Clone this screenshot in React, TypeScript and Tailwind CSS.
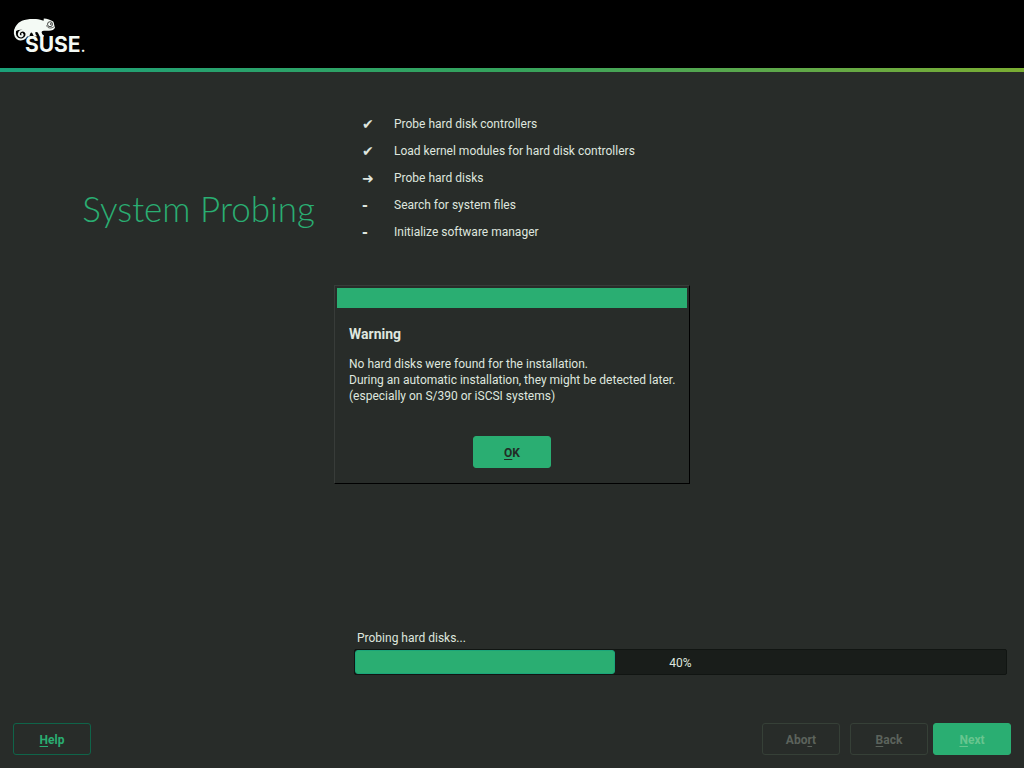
import React from "react";

type StepState = "done" | "current" | "pending";

const steps: { label: string; state: StepState }[] = [
  { label: "Probe hard disk controllers", state: "done" },
  { label: "Load kernel modules for hard disk controllers", state: "done" },
  { label: "Probe hard disks", state: "current" },
  { label: "Search for system files", state: "pending" },
  { label: "Initialize software manager", state: "pending" },
];

const marks: Record<StepState, string> = {
  done: "✔",
  current: "➜",
  pending: "-",
};

const progress = 40;

function SuseLogo() {
  return (
    <svg width="80" height="44" viewBox="0 0 80 44" role="img" aria-label="SUSE logo">
      {/* chameleon body, legs and head */}
      <path
        fill="#f4faf5"
        d="M1 17C1 11.5 4 7 9 4.7C13 3 18 2.7 23 3C26 3.2 28.6 3.9 30.6 4.8L30.8 2.6C34 2.9 38 4 40.2 5.6C41.2 7 41 9.4 42 11.6C41.2 13.8 38.8 14.7 36 14.8L31 14.7C28.8 14.8 28.2 15.8 29 17.6C29.3 18.6 29.8 19 30.9 19.3V20.4H26.8C25.8 19 25.4 16.6 24 15.9L22.2 16.2C22.4 18 22.8 19 23.6 19.6V20.4H21C20 19 19.8 17 18.6 16.4C17.4 16.6 16.8 18 16.4 20.4H13.6C14.4 16.6 12 14 8.6 13.8C4.6 13.6 2 15 1 17Z"
      />
      {/* curled tail */}
      <path
        fill="none"
        stroke="#f4faf5"
        strokeWidth="2"
        strokeLinecap="round"
        d="M3 12.5C1.2 15.5 1.4 20.2 4.4 22.4C7.8 24.6 12.6 23 13.4 19.4C14.2 16 11 13.8 8.4 14.8C5.4 15.8 5 19.4 7.4 20.3C9.2 20.8 10.4 19 9.2 17.9"
      />
      {/* eye and mouth */}
      <circle cx="37" cy="8.2" r="2.5" fill="none" stroke="#000" strokeWidth=".7" />
      <circle cx="37.8" cy="8" r=".8" fill="#000" />
      <path d="M33.5 9.4C34.5 12.4 38.5 13 41.4 10.4" fill="none" stroke="#000" strokeWidth=".6" />
      <text x="12" y="36" fontFamily="Inter, sans-serif" fontSize="21" fontWeight="700" fill="#f4faf5">
        SUSE
        <tspan fontSize="14">.</tspan>
      </text>
    </svg>
  );
}

function Key({ children }: { children: string }) {
  return <span className="underline decoration-1 underline-offset-2 [text-decoration-skip-ink:none]">{children}</span>;
}

const buttonBase = "h-8 w-[78px] rounded-[3px] border pt-0.5 text-xs font-bold leading-4";

export default function App() {
  return (
    <div className="flex min-h-screen flex-col bg-[#282c29] font-['Roboto',sans-serif] text-xs leading-4 text-[#dfe6df]">
      <header className="bg-black">
        <div className="flex h-[68px] items-center px-[13px] pt-2">
          <SuseLogo />
        </div>
        <div className="h-1 bg-linear-to-r from-[#1ba179] via-[#35a35c] to-[#7aad32]" />
      </header>

      <main className="flex flex-1 flex-col">
        <section className="grid grid-cols-[355px_1fr] items-start pt-11">
          <h1 className="pt-[72px] pr-10 text-right font-['Lato',sans-serif] text-[35px] font-light leading-10 whitespace-nowrap text-[#2aae72]">
            System Probing
          </h1>
          <ul className="flex flex-col gap-[11px] pl-[7px]">
            {steps.map((step) => (
              <li key={step.label} className="flex h-4 items-center">
                <span className="w-8 font-['DejaVu_Sans',sans-serif] text-sm font-bold">{marks[step.state]}</span>
                <span>{step.label}</span>
              </li>
            ))}
          </ul>
        </section>

        <section className="mt-auto pr-[17px] pb-12 pl-[354px]">
          <p id="progress-label" className="mb-[3px] pl-[3px]">
            Probing hard disks...
          </p>
          <div
            role="progressbar"
            aria-labelledby="progress-label"
            aria-valuenow={progress}
            aria-valuemin={0}
            aria-valuemax={100}
            className="grid h-[26px] items-center rounded-[2px] border border-[#111512] bg-[#191d1a]"
          >
            <div
              className="col-start-1 row-start-1 h-6 rounded-[3px] border border-[#1ba57a] bg-[#2aae72]"
              style={{ width: `${progress}%` }}
            />
            <span className="col-start-1 row-start-1 pt-0.5 text-center">{progress}%</span>
          </div>
        </section>
      </main>

      <footer className="flex px-[13px] pb-[13px]">
        <button type="button" className={`${buttonBase} border-[#0f6449] text-[#2aae72]`}>
          <Key>H</Key>elp
        </button>
        <div className="ml-auto flex">
          <button type="button" disabled className={`${buttonBase} mr-2.5 border-[#364037] text-[#5c635c]`}>
            Abo<Key>r</Key>t
          </button>
          <button type="button" disabled className={`${buttonBase} mr-[5px] border-[#364037] text-[#5c635c]`}>
            <Key>B</Key>ack
          </button>
          <button type="button" disabled className={`${buttonBase} border-[#2aae72] bg-[#2aae72] text-[#68c58f]`}>
            <Key>N</Key>ext
          </button>
        </div>
      </footer>

      <div className="fixed inset-0 flex items-center justify-center">
        <div
          role="alertdialog"
          aria-labelledby="warning-title"
          aria-describedby="warning-text"
          className="w-[356px] border border-t-[#383c39] border-r-black border-b-black border-l-[#383c39] bg-[#282c29] p-0.5"
        >
          <div className="h-5 bg-[#2aae72]" />
          <div className="px-3 pt-4 pb-[13px]">
            <h2 id="warning-title" className="text-sm font-bold leading-5">
              Warning
            </h2>
            <p id="warning-text" className="mt-3 whitespace-nowrap">
              No hard disks were found for the installation.
              <br />
              During an automatic installation, they might be detected later.
              <br />
              (especially on S/390 or iSCSI systems)
            </p>
            <div className="mt-8 flex justify-center">
              <button type="button" className={`${buttonBase} border-[#2aae72] bg-[#2aae72] text-[#222b25]`}>
                <Key>O</Key>K
              </button>
            </div>
          </div>
        </div>
      </div>
    </div>
  );
}
